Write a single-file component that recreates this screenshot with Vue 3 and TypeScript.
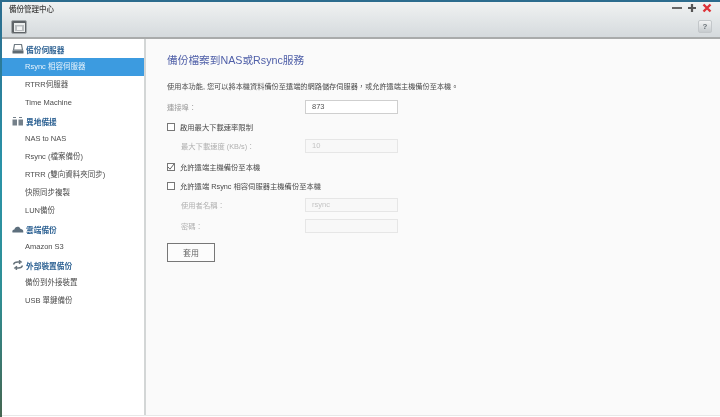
<script setup lang="ts">
interface Item { label: string; active?: boolean }
interface Group { title: string; icon: string; items: Item[] }
const groups: Group[] = [
  { title: '備份伺服器', icon: 'server', items: [{ label: 'Rsync 相容伺服器', active: true }, { label: 'RTRR伺服器' }, { label: 'Time Machine' }] },
  { title: '異地備援', icon: 'remote', items: [{ label: 'NAS to NAS' }, { label: 'Rsync (檔案備份)' }, { label: 'RTRR (雙向資料夾同步)' }, { label: '快照同步複製' }, { label: 'LUN備份' }] },
  { title: '雲端備份', icon: 'cloud', items: [{ label: 'Amazon S3' }] },
  { title: '外部裝置備份', icon: 'sync', items: [{ label: '備份到外接裝置' }, { label: 'USB 單鍵備份' }] },
]
</script>

<template>
  <div class="win">
    <header class="head">
      <div class="titlerow">
        <span class="apptitle">備份管理中心</span>
        <div class="winbtns">
          <svg width="10" height="10" viewBox="0 0 10 10"><path d="M0 5h10" stroke="#666" stroke-width="2" /></svg>
          <svg width="10" height="10" viewBox="0 0 10 10"><path d="M1 5h8M5 1v8" stroke="#555" stroke-width="2.200" /></svg>
          <svg width="10" height="10" viewBox="0 0 10 10"><path d="M1.500 1.500l7 7M8.500 1.500l-7 7" stroke="#dd3339" stroke-width="2.400" /></svg>
        </div>
      </div>
      <div class="toolrow">
        <div class="toolbtn">
          <svg width="11" height="9" viewBox="0 0 11 9"><rect x="0.500" y="0.500" width="10" height="8" fill="#b9bdc0" stroke="#eceeee" /><rect x="0" y="0" width="11" height="2" fill="#eceeee" /><rect x="3" y="3.500" width="5" height="3.500" fill="#f2f3f3" /></svg>
        </div>
        <div class="helpbtn">?</div>
      </div>
    </header>
    <div class="body">
      <nav class="side">
        <template v-for="g in groups" :key="g.title">
          <div class="grouphead">
            <svg class="gicon" width="12" height="10" viewBox="0 0 12 10">
              <g v-if="g.icon === 'server'">
                <path d="M2.500 0.500h7l1 5.500h-9z" fill="none" stroke="#6f7a82" stroke-width="1.200" />
                <rect x="0.500" y="6.500" width="11" height="3" fill="#5f6a72" />
              </g>
              <g v-else-if="g.icon === 'remote'" fill="#75808a">
                <path d="M1 1.500h3M7 1.500h3" stroke="#75808a" stroke-width="1" />
                <rect x="0.500" y="3.500" width="4.500" height="6" />
                <rect x="6.500" y="3.500" width="4.500" height="6" />
              </g>
              <path v-else-if="g.icon === 'cloud'" d="M0.500 8.500c-.6-1.700.5-3 1.800-3C2.800 3.500 4.500 2.300 6.300 2.800c1.200.3 2 1.300 2.200 2.300 1.900-.2 3.200 1.500 2.700 3.400z" fill="#5d6f7d" />
              <g v-else fill="none" stroke="#66727a" stroke-width="1.300">
                <path d="M1.500 4.500c.4-1.700 2-2.500 4.200-2.500H8M7 0.300L9.200 2 7 3.700" />
                <path d="M10.500 5.500c-.4 1.700-2 2.500-4.200 2.500H4M5 6.300L2.800 8 5 9.700" />
              </g>
            </svg>
            <span>{{ g.title }}</span>
          </div>
          <div v-for="it in g.items" :key="it.label" class="item" :class="{ active: it.active }">{{ it.label }}</div>
        </template>
      </nav>
      <main class="main">
        <h1 class="title">備份檔案到NAS或Rsync服務</h1>
        <p class="desc">使用本功能, 您可以將本機資料備份至遠端的網路儲存伺服器，或允許遠端主機備份至本機。</p>
        <div class="row port">
          <span class="lab plain">連接埠：</span>
          <div class="field strong">873</div>
        </div>
        <div class="check first">
          <span class="box"></span><span>啟用最大下載速率限制</span>
        </div>
        <div class="row sub speed">
          <span class="lab">最大下載速度 (KB/s)：</span>
          <div class="field off">10</div>
        </div>
        <div class="check allow">
          <span class="box">
            <svg width="8" height="8" viewBox="0 0 8 8"><path d="M1 4l2 2.200L7 1" fill="none" stroke="#666" stroke-width="1" /></svg>
          </span><span>允許遠端主機備份至本機</span>
        </div>
        <div class="check second">
          <span class="box"></span><span>允許遠端 Rsync 相容伺服器主機備份至本機</span>
        </div>
        <div class="row sub user">
          <span class="lab">使用者名稱：</span>
          <div class="field off">rsync</div>
        </div>
        <div class="row sub pass">
          <span class="lab">密碼：</span>
          <div class="field off"></div>
        </div>
        <button class="apply" type="button">套用</button>
      </main>
    </div>
  </div>
</template>

<style>
html, body { margin: 0; padding: 0; }
</style>

<style scoped>
.win {
  width: 720px;
  height: 417px;
  box-sizing: border-box;
  overflow: hidden;
  display: flex;
  flex-direction: column;
  border-top: 2px solid #2c6c8e;
  border-left: 2px solid;
  border-image: linear-gradient(#2c6c8e, #2a93a8 40%, #2f8f95 70%, #46654f) 2;
  border-right: 0;
  border-bottom: 0;
  font-family: "Liberation Sans", "Noto Sans CJK TC", sans-serif;
  font-size: 8px;
  color: #444;
  background: #fff;
  filter: blur(0.4px);
}
.head {
  height: 37px;
  box-sizing: border-box;
  flex: none;
  display: flex;
  flex-direction: column;
  background: linear-gradient(#f0f2f2, #d5dadd);
  border-bottom: 2px solid #a9abab;
}
.titlerow {
  display: flex;
  justify-content: space-between;
  align-items: center;
  height: 12px;
  padding: 0 8px 0 7px;
}
.apptitle { font-size: 7.500px; color: #3f3f3f; font-weight: 500; }
.winbtns { display: flex; gap: 5px; margin-top: 0; }
.toolrow {
  display: flex;
  justify-content: space-between;
  align-items: flex-start;
  padding: 6px 8px 0 9px;
}
.toolbtn {
  width: 16px;
  height: 14px;
  box-sizing: border-box;
  border-radius: 2px;
  background: #5f6468;
  border: 1px solid #a5aaad;
  display: flex;
  align-items: center;
  justify-content: center;
}
.helpbtn {
  width: 14px;
  height: 13px;
  box-sizing: border-box;
  border: 1px solid #c3c7ca;
  border-radius: 2px;
  background: linear-gradient(#f2f3f4, #c6cbce);
  color: #687076;
  font-size: 8px;
  font-weight: 700;
  line-height: 11px;
  text-align: center;
}
.body { flex: 1; display: flex; min-height: 0; margin-bottom: 1px; border-bottom: 1px solid #e8e8e8; }
.side {
  width: 144px;
  flex: none;
  box-sizing: border-box;
  background: #fff;
  border-right: 2px solid #d3d6d6;
  padding-top: 1px;
}
.grouphead {
  height: 18px;
  display: flex;
  align-items: center;
  gap: 2px;
  padding-left: 10px;
  color: #2f6394;
  font-weight: 700;
  font-size: 7.700px;
}
.gicon { flex: none; }
.item {
  height: 18px;
  line-height: 18px;
  padding-left: 23px;
  color: #4d4d4d;
  font-size: 7.500px;
}
.item.active { background: #3c9be0; color: #e8f3fb; }
.main {
  flex: 1;
  background: #fafafa;
  padding-left: 21px;
  min-width: 0;
}
.title {
  margin: 14px 0 0;
  font-size: 10.700px;
  line-height: 14px;
  font-weight: 400;
  color: #4f5fa8;
}
.desc { margin: 14px 0 0; font-size: 7.200px; line-height: 12px; color: #4a4a4a; white-space: nowrap; }
.row { display: flex; align-items: center; }
.lab { width: 138px; flex: none; box-sizing: border-box; color: #b0b0b0; font-size: 7.300px; }
.lab.plain { color: #999; }
.sub .lab { padding-left: 14px; }
.field {
  width: 93px;
  height: 14px;
  box-sizing: border-box;
  border: 1px solid #e6e6e6;
  padding-left: 6px;
  font-size: 7.500px;
  line-height: 12px;
  background: #fcfcfc;
}
.field.strong { border-color: #cfcfcf; background: #fff; color: #555; }
.field.off { color: #c4c4c4; background: #f8f8f8; }
.port { margin-top: 7px; }
.check { display: flex; align-items: center; gap: 5px; height: 12px; font-size: 7.300px; color: #4a4a4a; }
.box {
  width: 8px;
  height: 8px;
  box-sizing: border-box;
  border: 1px solid #777;
  background: #fff;
  flex: none;
  display: flex;
  align-items: center;
  justify-content: center;
}
.box svg { flex: none; }
.first { margin-top: 7px; }
.speed { margin-top: 6px; }
.allow { margin-top: 8px; }
.second { margin-top: 7px; }
.user { margin-top: 6px; }
.pass { margin-top: 7px; }
.apply {
  display: block;
  margin-top: 10px;
  width: 48px;
  height: 19px;
  box-sizing: border-box;
  padding: 0;
  border: 1px solid #777;
  background: #fcfcfc;
  color: #666;
  font-family: inherit;
  font-size: 8px;
}
</style>
